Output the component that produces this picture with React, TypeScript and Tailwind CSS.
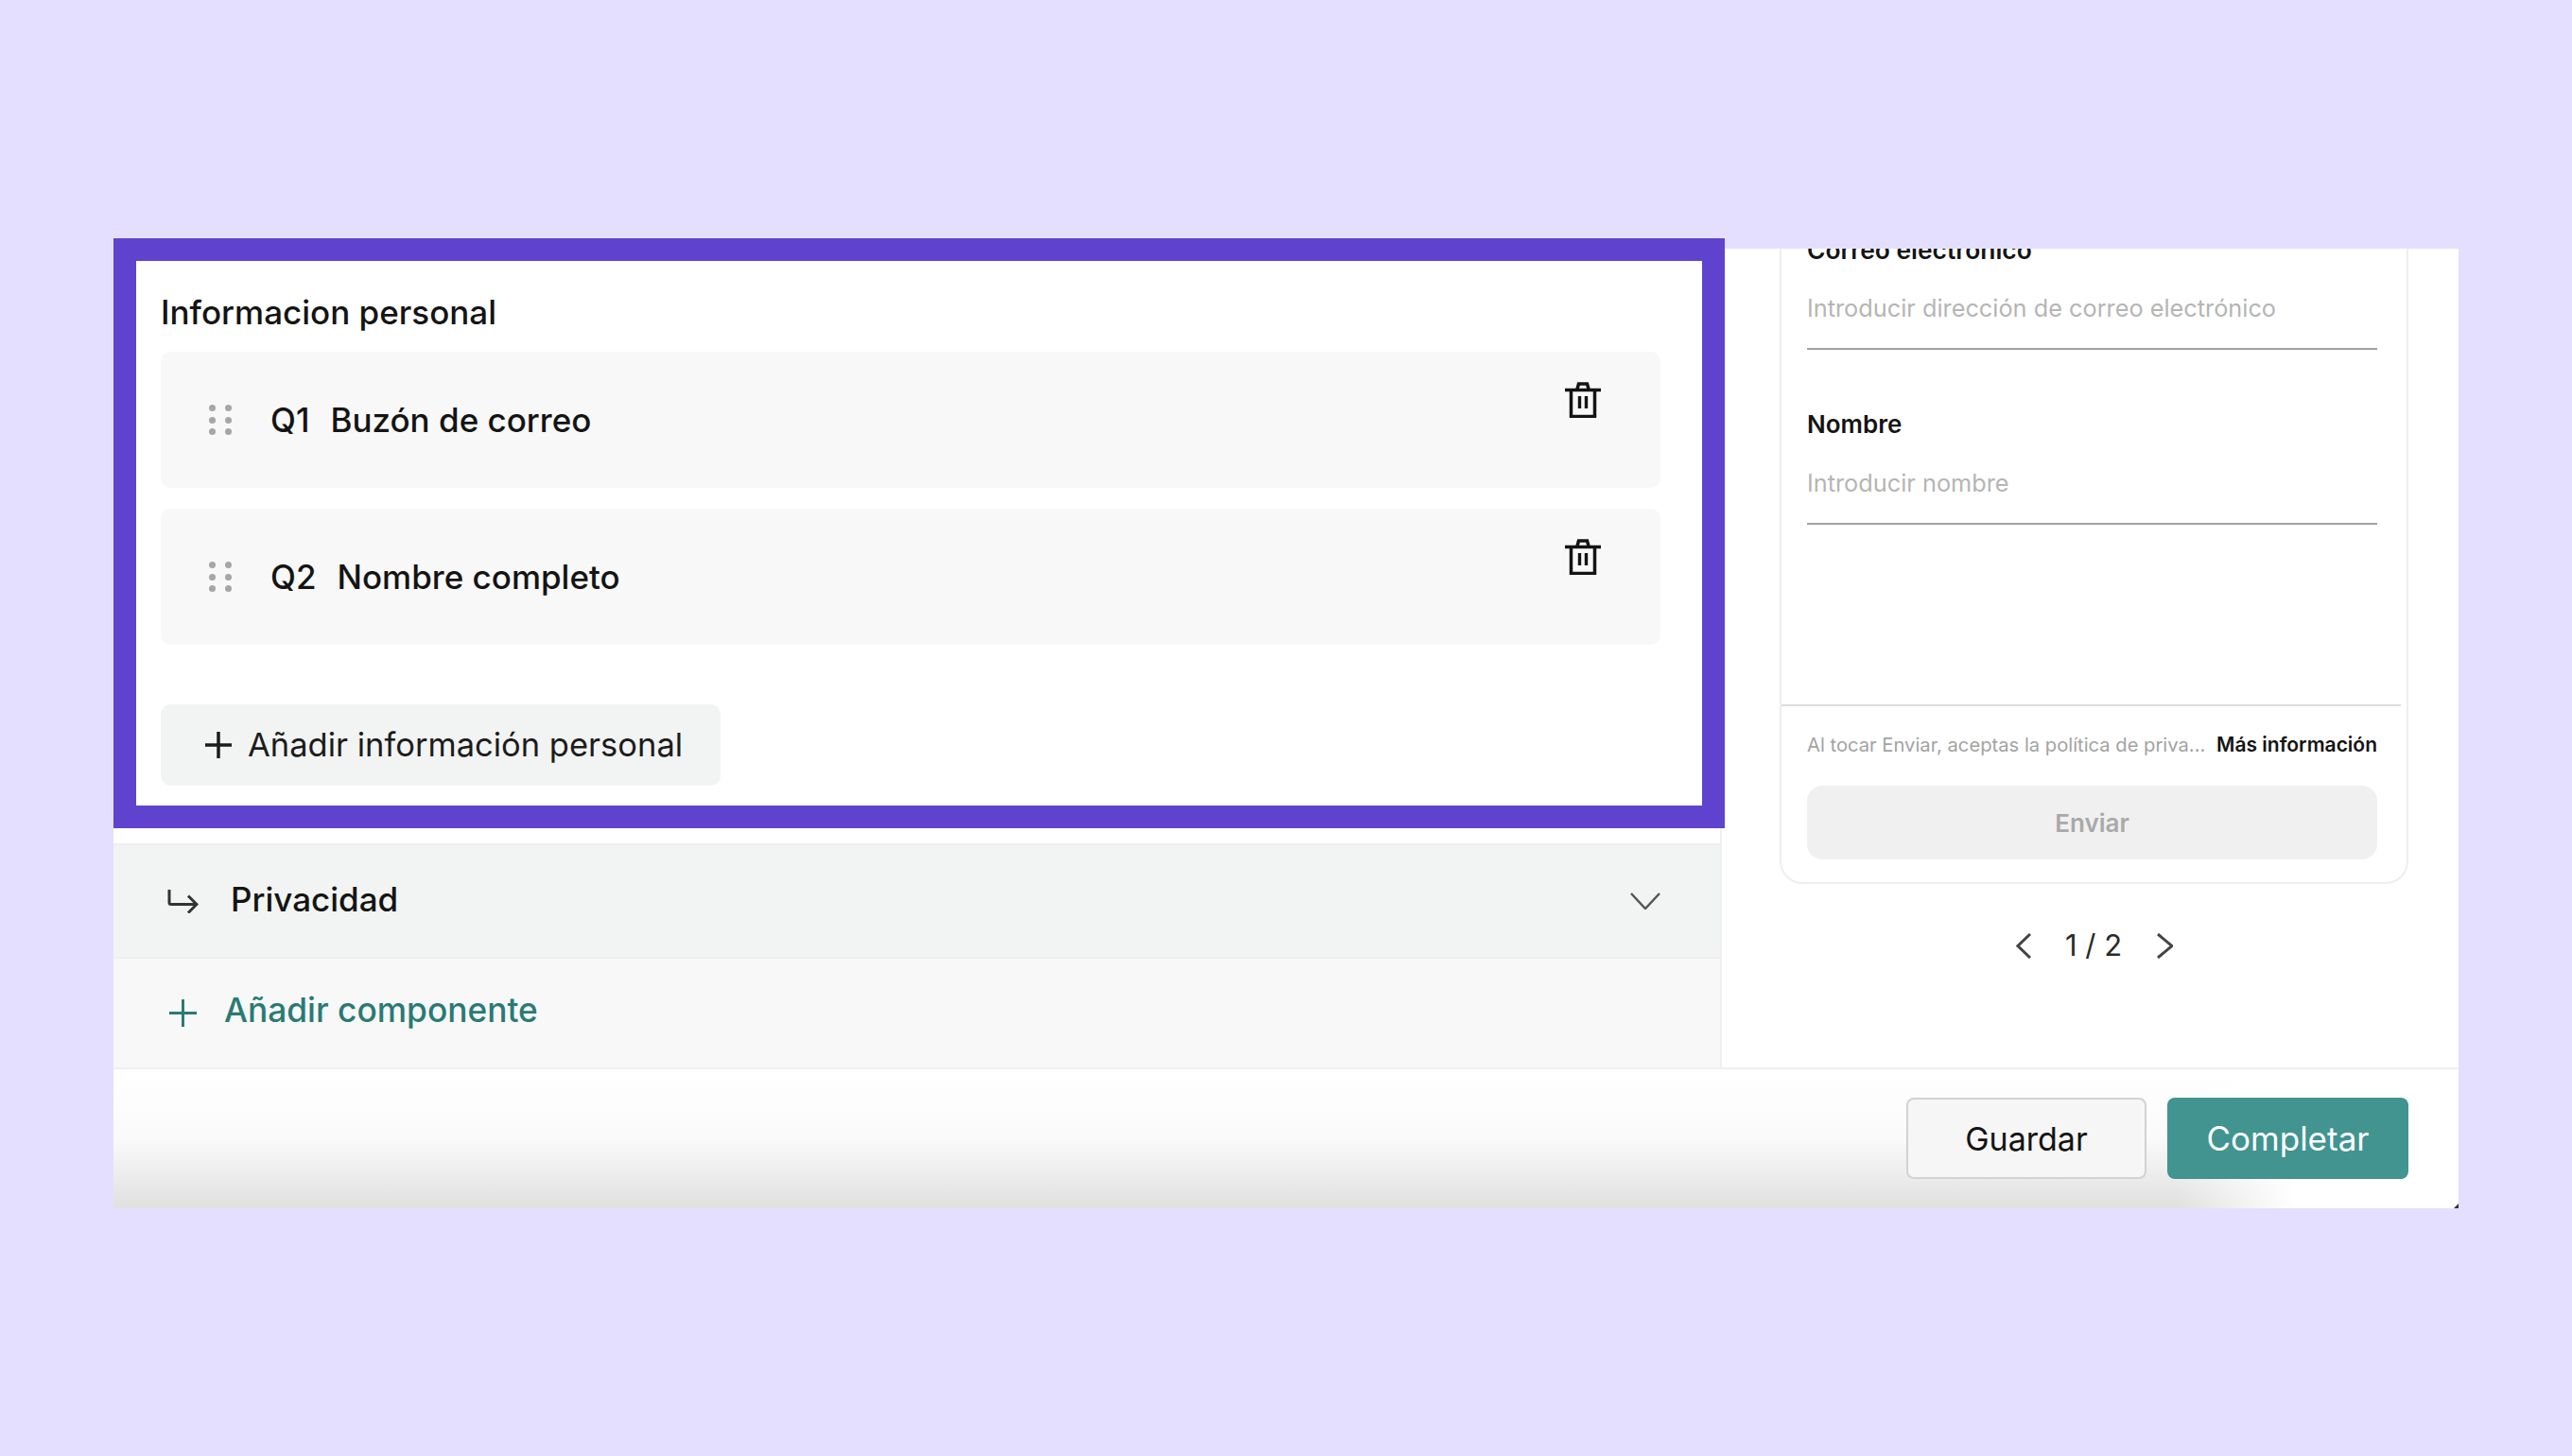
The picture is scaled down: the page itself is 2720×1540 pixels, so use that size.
import React from 'react';

const questions = [
  { id: 'Q1', label: 'Buzón de correo' },
  { id: 'Q2', label: 'Nombre completo' },
];

const DragHandle = () => (
  <div className="grid grid-cols-2 gap-x-[10px] gap-y-[5.5px] w-[24px] shrink-0">
    {[0, 1, 2, 3, 4, 5].map((dot) => (
      <span key={dot} className="w-[7px] h-[7px] rounded-full bg-[#a6a6a6]" />
    ))}
  </div>
);

const TrashIcon = () => (
  <svg width="38" height="38" viewBox="0 0 38 38" fill="none" stroke="#141414" className="shrink-0">
    <path d="M0 8.5h38" strokeWidth="3.5" />
    <path d="M13 7.5l1.5-5.5h9l1.5 5.5" strokeWidth="3.5" />
    <path d="M6.5 8.5v28h25v-28" strokeWidth="3.5" />
    <path d="M15.5 15v13M22.5 15v13" strokeWidth="3.4" />
  </svg>
);

const PlusIcon = ({ size, color, stroke }: { size: number; color: string; stroke: number }) => (
  <svg width={size} height={size} viewBox={`0 0 ${size} ${size}`} fill="none" stroke={color} strokeWidth={stroke} className="shrink-0">
    <path d={`M0 ${size / 2}h${size}M${size / 2} 0v${size}`} />
  </svg>
);

const ArrowIcon = () => (
  <svg width="34" height="26" viewBox="0 0 34 26" fill="none" stroke="#333" strokeWidth="3" className="shrink-0">
    <path d="M3 1v13.5q0 2 2 2h26" />
    <path d="M23 7.5l9 9-9 9" />
  </svg>
);

const Chevron = ({ d, w, h, color, stroke }: { d: string; w: number; h: number; color: string; stroke: number }) => (
  <svg width={w} height={h} viewBox={`0 0 ${w} ${h}`} fill="none" stroke={color} strokeWidth={stroke} className="shrink-0">
    <path d={d} />
  </svg>
);

export default function App() {
  return (
    <div className="min-h-[1540px] bg-[#e4dfff] pt-[263px] pl-[120px] font-['Inter',sans-serif] text-[#141414]">
      <div className="w-[2480px] bg-white">
        <div className="flex h-[866px]">
          {/* Left column with highlighted section */}
          <div className="w-[1701px] shrink-0 border-r-2 border-[#f0f0f0] flex flex-col">
            <div className="relative z-10 -mt-[11px] w-[1704px] h-[624px] shrink-0 border-[24px] border-[#5f43cf] bg-white pl-[26px] pr-[44px]">
              <h2 className="mt-[32px] h-[44px] leading-[44px] text-[35px] font-medium">Informacion personal</h2>
              <div className="mt-[20px] flex flex-col gap-[22px]">
                {questions.map((q) => (
                  <div key={q.id} className="h-[144px] rounded-[10px] bg-[#f8f8f8] flex items-start pl-[51px] pr-[63px]">
                    <div className="h-full flex items-center">
                      <DragHandle />
                      <span className="ml-[41px] text-[35px] font-medium">{q.id}</span>
                      <span className="ml-[22px] text-[35px] font-medium">{q.label}</span>
                    </div>
                    <div className="ml-auto mt-[32px]">
                      <TrashIcon />
                    </div>
                  </div>
                ))}
              </div>
              <button className="mt-[63px] h-[86px] w-[592px] rounded-[10px] bg-[#f2f4f3] flex items-center pl-[47px] text-[34.5px] text-[#1c1c1c] whitespace-nowrap">
                <PlusIcon size={28} color="#1c1c1c" stroke={3.5} />
                <span className="ml-[17px] pb-[1px]">Añadir información personal</span>
              </button>
            </div>

            <div className="mt-[16px] h-[120px] shrink-0 border-t-2 border-[#efefef] bg-[#f2f4f3] flex items-center pl-[56px] pr-[63px]">
              <ArrowIcon />
              <span className="ml-[34px] pb-[3px] text-[35px] font-medium">Privacidad</span>
              <div className="ml-auto">
                <Chevron d="M1 1l15 16 15-16" w={32} h={18} color="#555" stroke={2.5} />
              </div>
            </div>

            <div className="flex-1 border-t-2 border-[#efefef] bg-[#f8f8f8] flex items-center pl-[59px]">
              <PlusIcon size={29} color="#2a7a75" stroke={3} />
              <span className="ml-[29px] pb-[5px] text-[35.3px] font-medium text-[#2a7a75]">Añadir componente</span>
            </div>
          </div>

          {/* Form preview */}
          <div className="flex-1 overflow-hidden pl-[61px] pr-[53px]">
            <div className="-mt-[60px] h-[732px] rounded-[24px] border-2 border-[#eeeeee] flex flex-col">
              <div className="px-[27px] pb-[24px]">
                <div className="mt-[41px] h-[36px] leading-[36px] text-[26.4px] font-semibold">Correo electrónico</div>
                <div className="mt-[26px] h-[36px] leading-[36px] text-[25.3px] text-[#b5b5b5]">Introducir dirección de correo electrónico</div>
              </div>
              <div className="ml-[27px] mr-[31px] h-[2px] bg-[#a0a0a5]" />
              <div className="px-[27px] pb-[24px]">
                <div className="mt-[61px] h-[36px] leading-[36px] text-[26px] font-semibold">Nombre</div>
                <div className="mt-[26px] h-[36px] leading-[36px] text-[25.3px] text-[#b5b5b5]">Introducir nombre</div>
              </div>
              <div className="ml-[27px] mr-[31px] h-[2px] bg-[#a0a0a5]" />
              <div className="mt-[190px] mr-[6px] h-[2px] bg-[#dcdcdc]" />
              <div className="mt-[23px] ml-[27px] mr-[31px] h-[36px] flex items-center justify-between whitespace-nowrap">
                <span className="text-[20.2px] text-[#a3a3a3]">Al tocar Enviar, aceptas la política de priva...</span>
                <span className="text-[21px] font-semibold">Más información</span>
              </div>
              <button className="mt-[25px] ml-[27px] mr-[31px] h-[78px] shrink-0 rounded-[16px] bg-[#f0f0f0] text-[26px] font-semibold text-[#a9a9a9]">Enviar</button>
            </div>
            <div className="mt-[47px] h-[36px] flex items-center justify-center gap-[36px] pl-[1px]">
              <Chevron d="M15 1L2 13.5 15 26" w={16} h={27} color="#444" stroke={3} />
              <span className="text-[31px] text-[#2a2a2a]">1 / 2</span>
              <Chevron d="M2 1l15 12.5L2 26" w={18} h={27} color="#444" stroke={3} />
            </div>
          </div>
        </div>

        {/* Footer actions */}
        <div className="relative h-[149px] border-t-2 border-[#efefef] bg-[linear-gradient(to_right,rgba(255,255,255,0)_88%,#ffffff_93%),linear-gradient(to_bottom,#ffffff_0%,#fafafa_50%,#e0e0e0_100%)] flex justify-end items-start gap-[22px] pt-[30px] pr-[53px]">
          <button className="w-[254px] h-[86px] rounded-[8px] border-2 border-[#d2d2d2] bg-[#f6f6f6] text-[34px]">Guardar</button>
          <button className="w-[255px] h-[86px] rounded-[8px] bg-[#419490] text-[35px] text-white">Completar</button>
          <svg width="5" height="5" viewBox="0 0 5 5" className="absolute right-0 bottom-0">
            <path d="M5 0v5H0z" fill="#333" />
          </svg>
        </div>
      </div>
    </div>
  );
}
